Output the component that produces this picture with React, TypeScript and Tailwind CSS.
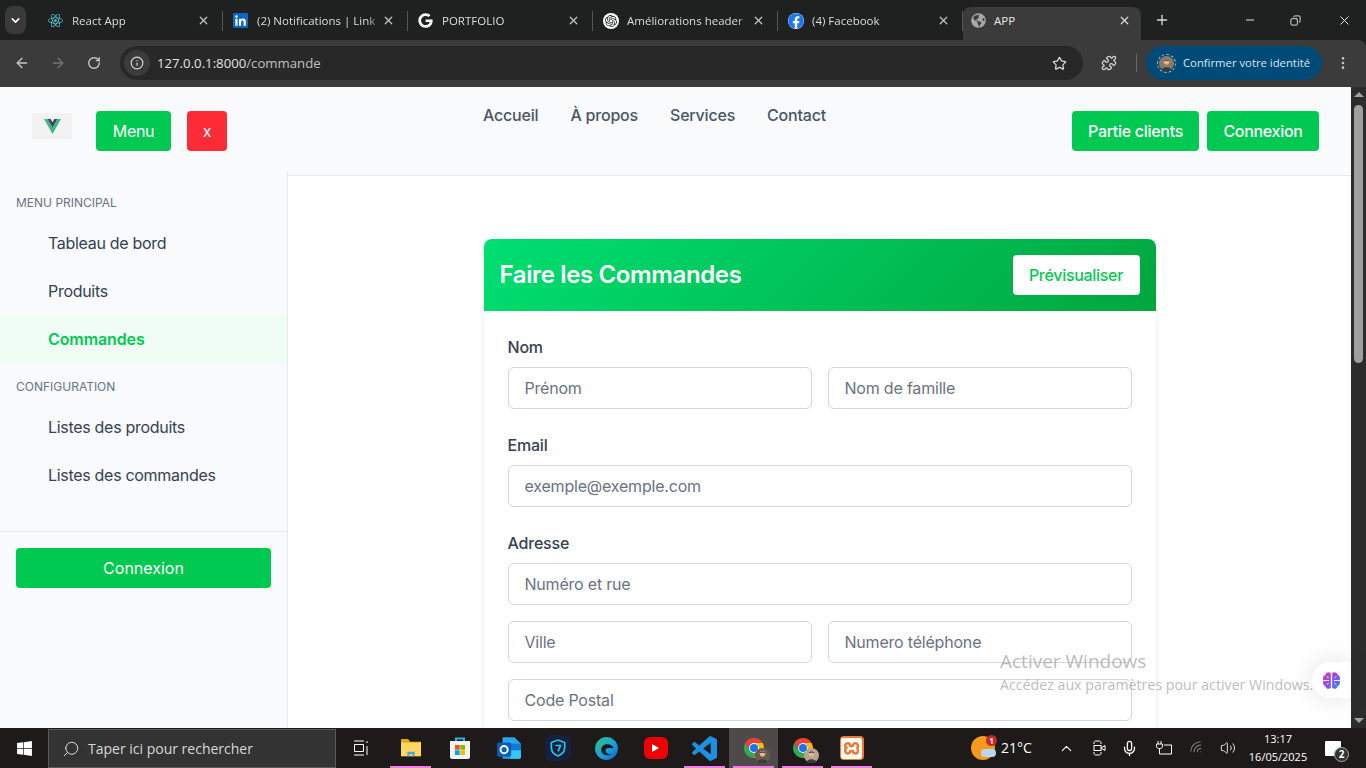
import type { ReactNode } from "react";
import { ArrowLeft, ArrowRight, ChevronDown, ChevronUp, Copy, EllipsisVertical, Info, Mic, Minus, Plus, Puzzle, RotateCw, Search, Star, Volume2, Wifi, X } from "lucide-react";
import { FaFacebook, FaGlobeAmericas, FaGoogle, FaLinkedin, FaReact, FaWindows } from "react-icons/fa";
import { SiOpenai, SiXampp } from "react-icons/si";

const chromeFont = { fontFamily: '"Open Sans", "Liberation Sans", sans-serif' };
const pageFont = { fontFamily: 'Inter, "Liberation Sans", sans-serif' };

type TabItem = { title: string; icon: ReactNode };

const tabs: TabItem[] = [
  { title: "React App", icon: <FaReact className="text-[#5fc9d8]" size={15} /> },
  {
    title: "(2) Notifications | Link",
    icon: (
      <span className="flex size-[15px] items-center justify-center rounded-sm bg-white">
        <FaLinkedin className="text-[#0a66c2]" size={17} />
      </span>
    ),
  },
  { title: "PORTFOLIO", icon: <FaGoogle className="text-white" size={15} /> },
  {
    title: "Améliorations header",
    icon: (
      <span className="flex size-4 items-center justify-center rounded-full bg-white">
        <SiOpenai className="text-[#222]" size={12} />
      </span>
    ),
  },
  {
    title: "(4) Facebook",
    icon: (
      <span className="flex size-4 items-center justify-center rounded-full bg-white">
        <FaFacebook className="text-[#1877f2]" size={16} />
      </span>
    ),
  },
];

function Tab({ title, icon }: TabItem) {
  return (
    <div className="flex h-[40px] w-[185px] shrink-0 items-center pl-[10px] pt-px">
      <span className="flex w-[24px] shrink-0 items-center">{icon}</span>
      <span className="w-[125px] shrink-0 overflow-hidden whitespace-nowrap text-[11.5px] text-[#dcdcdc] [mask-image:linear-gradient(to_right,black_88%,transparent)]">{title}</span>
      <X className="shrink-0 text-[#c7c7c7]" size={13} strokeWidth={2.2} />
      <span className="ml-3 h-5 w-px shrink-0 bg-[#555]" />
    </div>
  );
}

function Avatar({ skin, size }: { skin: string; size: string }) {
  return (
    <svg viewBox="0 0 16 16" className={size}>
      <circle cx="8" cy="8" r="8" fill={skin} />
      <circle cx="8" cy="6" r="3" fill="#e2b998" />
      <path fill="#2b2622" d="M5 5.500C5 3 11 3 11 5.500 9 4.500 7 4.500 5 5.500z" />
      <path fill="#3c3a3a" d="M3 15c0-4 10-4 10 0a8 8 0 0 1-10 0z" />
    </svg>
  );
}

function ChromeLogo({ badge }: { badge: string }) {
  return (
    <span className="relative block size-6">
      <svg viewBox="0 0 24 24" className="size-6">
        <path fill="#ea4335" d="M12 2A10 10 0 0 1 20.66 7H12a5 5 0 0 0-4.33 7.5L3.34 7A10 10 0 0 1 12 2z" />
        <path fill="#34a853" d="M3.34 7A10 10 0 0 0 12 22l4.33-7.5a5 5 0 0 1-8.66 0z" />
        <path fill="#fbbc04" d="M20.66 7H12a5 5 0 0 1 4.33 7.5L12 22A10 10 0 0 0 20.66 7z" />
        <circle cx="12" cy="12" r="5" fill="#fff" />
        <circle cx="12" cy="12" r="4" fill="#1a73e8" />
      </svg>
      <span className="absolute -bottom-[3px] -right-[4px]">
        <Avatar skin={badge} size="size-[15px]" />
      </span>
    </span>
  );
}

function ChromeBar() {
  return (
    <div style={chromeFont} className="h-[87px] shrink-0 bg-[#1f2020]">
      <div className="flex h-[40px] items-end">
        <div className="ml-[5px] mr-[12px] flex h-[28px] w-[21px] self-center items-center justify-center rounded-lg bg-[#3a3a3a]">
          <ChevronDown className="text-white" size={13} strokeWidth={3} />
        </div>
        {tabs.map((tab) => (
          <Tab key={tab.title} {...tab} />
        ))}
        <div className="flex h-[33px] w-[178px] items-center rounded-t-lg bg-[#3b3b3b] pb-[6px] pl-2 pr-[10px]">
          <FaGlobeAmericas className="mr-2 text-[#a5a8ac]" size={15} />
          <span className="flex-1 text-[11.5px] text-[#e6e6e6]">APP</span>
          <X className="text-[#d8d8d8]" size={13} strokeWidth={2.2} />
        </div>
        <div className="flex h-[40px] flex-1 items-center">
          <Plus className="ml-[13px] text-[#d8d8d8]" size={16} />
          <Minus className="ml-[74px] text-[#e6e6e6]" size={12} />
          <Copy className="ml-[34px] -scale-x-100 text-[#e6e6e6]" size={11} />
          <X className="ml-[36px] text-[#e6e6e6]" size={15} strokeWidth={1.6} />
        </div>
      </div>
      <div className="flex h-[47px] items-center rounded-tr-lg bg-[#3b3b3b] pb-[1px]">
        <ArrowLeft className="ml-[14px] text-[#c7c7c7]" size={16} />
        <ArrowRight className="ml-[20px] text-[#747474]" size={16} />
        <RotateCw className="ml-[21px] text-[#c7c7c7]" size={14} strokeWidth={2.4} />
        <div className="ml-[19px] flex h-[34px] w-[963px] items-center rounded-full bg-[#282828]">
          <span className="ml-[4px] flex size-[26px] items-center justify-center rounded-full bg-[#3b3b3b]">
            <Info className="text-[#d8d8d8]" size={14} />
          </span>
          <span className="ml-[7px] flex-1 pt-px text-[13.2px] text-[#e3e3e3]">
            127.0.0.1:8000<span className="text-[#c0c0c0]">/commande</span>
          </span>
          <Star className="mr-[16px] text-[#d8d8d8]" size={15} strokeWidth={2} />
        </div>
        <Puzzle className="ml-[18px] text-[#d0d0d0]" size={16} />
        <span className="ml-[19px] h-[18px] w-px bg-[#666]" />
        <div className="ml-[9px] flex h-[34px] w-[176px] items-center rounded-full bg-[#004a77] pl-[11px]">
          <span className="rounded-full border border-dashed border-[#9cc] p-px">
            <Avatar skin="#8a7a66" size="size-[15px]" />
          </span>
          <span className="ml-[7px] whitespace-nowrap text-[11.3px] text-[#d3e8f8]">Confirmer votre identité</span>
        </div>
        <EllipsisVertical className="ml-[13px] text-[#c7c7c7]" size={16} />
      </div>
    </div>
  );
}

function GreenButton({ children, className }: { children: ReactNode; className: string }) {
  return <button className={`h-10 rounded bg-green-500 text-base font-medium text-white ${className}`}>{children}</button>;
}

function PageHeader() {
  return (
    <header className="flex h-[89px] shrink-0 items-start border-b border-gray-200 bg-gray-50 px-8 tracking-[-0.3px]">
      <div className="mt-6 flex items-start">
        <div className="mt-[2px] flex h-[26px] w-10 items-center justify-center bg-[#f2f2f2]">
          <svg viewBox="0 0 24 21" className="h-[15px] w-[17px]">
            <path fill="#41b883" d="M0 0h5l7 12L19 0h5L12 21z" />
            <path fill="#35495e" d="M5 0h4.400L12 4.600 14.600 0H19l-7 12z" />
          </svg>
        </div>
        <GreenButton className="ml-6 w-[75px] font-normal">Menu</GreenButton>
        <button className="ml-4 h-10 w-10 rounded bg-red-500 text-base text-white">x</button>
      </div>
      <nav className="ml-[256px] mt-4 flex gap-8 text-base font-medium tracking-[-0.2px] text-gray-600">
        <span>Accueil</span>
        <span>À propos</span>
        <span>Services</span>
        <span>Contact</span>
      </nav>
      <div className="ml-auto mt-6 flex gap-2">
        <GreenButton className="w-[127px]">Partie clients</GreenButton>
        <GreenButton className="w-[112px]">Connexion</GreenButton>
      </div>
    </header>
  );
}

function SideLink({ label, active }: { label: string; active?: boolean }) {
  return (
    <div className={`flex h-12 items-center pl-12 text-base ${active ? "bg-green-50 font-semibold tracking-[-0.1px] text-green-500" : "tracking-[-0.3px] text-gray-700"}`}>
      {label}
    </div>
  );
}

function Sidebar() {
  return (
    <aside className="relative -mt-[5px] flex w-[288px] shrink-0 flex-col border-r border-gray-200 bg-gray-50">
      <div className="h-[361px] border-b border-gray-200 pt-[20px]">
        <p className="flex h-[24px] items-center pl-4 text-xs uppercase text-gray-500">Menu principal</p>
        <div className="mt-[4px]">
          <SideLink label="Tableau de bord" />
          <SideLink label="Produits" />
          <SideLink active label="Commandes" />
        </div>
        <p className="mt-[12px] flex h-[24px] items-center pl-4 text-xs uppercase text-gray-500">Configuration</p>
        <div className="mt-[4px]">
          <SideLink label="Listes des produits" />
          <SideLink label="Listes des commandes" />
        </div>
      </div>
      <div className="px-4 pt-4">
        <GreenButton className="w-[255px] font-normal">Connexion</GreenButton>
      </div>
    </aside>
  );
}

function Field({ placeholder }: { placeholder: string }) {
  return (
    <input
      placeholder={placeholder}
      className="h-[42px] w-full rounded-md border border-gray-300 bg-white px-4 text-base tracking-[-0.2px] outline-none placeholder:text-gray-500"
    />
  );
}

function OrderForm() {
  return (
    <main className="flex min-w-0 flex-1 justify-center overflow-hidden bg-white pt-[63px]">
      <section className="h-fit w-[672px] rounded-lg bg-white shadow-md">
        <div className="flex h-[72px] items-center justify-between rounded-t-lg bg-linear-[135deg] from-green-400 to-green-600 px-4">
          <h1 className="text-2xl font-semibold tracking-[-0.37px] text-white">Faire les Commandes</h1>
          <button className="h-10 w-[127px] rounded bg-white text-base font-medium tracking-[-0.3px] text-green-500">Prévisualiser</button>
        </div>
        <form className="flex flex-col px-6 pb-6 pt-6">
          <label className="mb-2 h-6 text-base font-medium tracking-[-0.2px] text-gray-700">Nom</label>
          <div className="grid grid-cols-2 gap-4">
            <Field placeholder="Prénom" />
            <Field placeholder="Nom de famille" />
          </div>
          <label className="mb-2 mt-6 h-6 text-base font-medium tracking-[-0.2px] text-gray-700">Email</label>
          <Field placeholder="exemple@exemple.com" />
          <label className="mb-2 mt-6 h-6 text-base font-medium tracking-[-0.2px] text-gray-700">Adresse</label>
          <div className="grid grid-cols-2 gap-4">
            <div className="col-span-2">
              <Field placeholder="Numéro et rue" />
            </div>
            <Field placeholder="Ville" />
            <Field placeholder="Numero téléphone" />
            <div className="col-span-2">
              <Field placeholder="Code Postal" />
            </div>
          </div>
        </form>
      </section>
    </main>
  );
}

function Scrollbar() {
  return (
    <div className="flex w-[15px] shrink-0 flex-col items-center bg-[#2c2c2c]">
      <span className="mt-[5px] size-0 border-x-[5px] border-b-[5px] border-x-transparent border-b-[#a0a0a0]" />
      <span className="mt-[8px] h-[258px] w-[9px] rounded-full bg-[#9f9f9f]" />
      <span className="mt-auto mb-[5px] size-0 border-x-[5px] border-t-[5px] border-x-transparent border-t-[#a0a0a0]" />
    </div>
  );
}

function BrainWidget() {
  return (
    <div className="absolute right-[15px] top-[575px] flex h-9 w-[39px] items-center justify-center rounded-l-full bg-white shadow-[0_0_24px_rgba(0,0,0,0.12)]">
      <svg viewBox="0 0 20 20" className="size-[19px]">
        <defs>
          <linearGradient id="brain" x1="0" y1="0" x2="1" y2="1">
            <stop offset="0" stopColor="#ec3f9c" />
            <stop offset="0.5" stopColor="#8b4cf0" />
            <stop offset="1" stopColor="#2f8bf5" />
          </linearGradient>
        </defs>
        <path fill="url(#brain)" d="M9.300 2v16C7 19.500 4 18.500 3.500 16 1 15 .5 12 1.500 10 .5 8 1 5 3.500 4 4 1.500 7 .5 9.300 2zM10.700 2v16c2.300 1.500 5.300.5 5.800-2 2.500-1 3-4 2-6 1-2 .5-5-2-6-.5-2.500-3.500-3.500-5.800-2z" />
        <path fill="none" stroke="#fff" strokeWidth="1" d="M1.500 10h6M12.500 10h6M5 5.500l2 2M15 5.500l-2 2M5 14.500l2-2M15 14.500l-2-2" />
      </svg>
    </div>
  );
}

function Watermark() {
  return (
    <div style={chromeFont} className="pointer-events-none absolute left-[1000px] top-[561px] whitespace-nowrap text-[#9d9d9d]/70">
      <p className="text-[19px] leading-[26px]">Activer Windows</p>
      <p className="mt-[2px] text-[14.2px] leading-[18px]">Accédez aux paramètres pour activer Windows.</p>
    </div>
  );
}

function TaskSlot({ children, open, active }: { children?: ReactNode; open?: boolean; active?: boolean }) {
  return (
    <div className={`relative flex h-full w-[49px] items-center justify-center ${active ? "bg-[#4e4a4a]" : ""}`}>
      {children}
      {open && <span className="absolute inset-x-[4px] bottom-0 h-[2px] bg-[#f07ce0]" />}
    </div>
  );
}

function Taskbar() {
  return (
    <div style={chromeFont} className="flex h-10 shrink-0 items-center bg-[#1e1a1a] text-white">
      <div className="flex w-[48px] justify-center">
        <FaWindows size={17} />
      </div>
      <div className="flex h-[39px] w-[288px] self-end items-center border border-[#5a5a5a] bg-[#333] pl-[13px]">
        <Search className="-scale-x-100 text-[#e0e0e0]" size={18} strokeWidth={1.3} />
        <span className="ml-[8px] text-sm text-[#d8d8d8]">Taper ici pour rechercher</span>
      </div>
      <div className="flex h-full w-[50px] items-center justify-center">
        <svg viewBox="0 0 16 16" className="size-4" fill="none" stroke="#fff" strokeWidth="1">
          <path d="M1 1h10M1 15h10M1.500 4.500h9v7h-9zM14 1v2M14 6v9" />
        </svg>
      </div>
      <TaskSlot open>
        <svg viewBox="0 0 24 22" className="h-[20px] w-[22px]">
          <path fill="#e3a812" d="M1 1h8l2 3h12v16H1z" />
          <path fill="#ffd660" d="M1 5h22v15H1z" />
          <path fill="#3ba7e6" d="M8 15h8v5h-2v-2h-4v2H8z" />
        </svg>
      </TaskSlot>
      <TaskSlot>
        <svg viewBox="0 0 24 24" className="size-6">
          <path fill="none" stroke="#27b5e8" strokeWidth="2" d="M8 6V2.500h8V6" />
          <path fill="#f2f2f2" d="M2 5h20v16a2 2 0 0 1-2 2H4a2 2 0 0 1-2-2z" />
          <path fill="#f25022" d="M7 9h4.700v4.700H7z" />
          <path fill="#7fba00" d="M12.300 9H17v4.700h-4.700z" />
          <path fill="#00a4ef" d="M7 14.300h4.700V19H7z" />
          <path fill="#ffb900" d="M12.300 14.300H17V19h-4.700z" />
        </svg>
      </TaskSlot>
      <TaskSlot>
        <svg viewBox="0 0 24 24" className="size-[26px]">
          <path fill="#28a8ea" d="M6 2h11l6 6v12a2 2 0 0 1-2 2H6z" />
          <path fill="#35c6f4" d="M13 14h10v6a2 2 0 0 1-2 2h-8z" />
          <path fill="#0f78d4" d="M6 8h17v6H6z" />
          <rect x="1" y="7" width="13" height="13" rx="1.500" fill="#0a5fb4" />
          <circle cx="7.500" cy="13.500" r="3.300" fill="none" stroke="#fff" strokeWidth="1.800" />
        </svg>
      </TaskSlot>
      <TaskSlot>
        <span className="flex size-[26px] items-center justify-center rounded-md bg-[#15203c]">
          <svg viewBox="0 0 24 24" className="size-5" fill="none" stroke="#25c7e8" strokeWidth="2">
            <path d="M12 2.500l8 3v6c0 5-3.500 8.500-8 10-4.500-1.500-8-5-8-10v-6z" />
            <path d="M9 9h6l-3 7" />
          </svg>
        </span>
      </TaskSlot>
      <TaskSlot>
        <svg viewBox="0 0 24 24" className="size-[25px]">
          <defs>
            <linearGradient id="edgeFill" x1="0" y1="0" x2="1" y2="1">
              <stop offset="0" stopColor="#35c26d" />
              <stop offset="0.55" stopColor="#1a9fe0" />
              <stop offset="1" stopColor="#0b62c4" />
            </linearGradient>
          </defs>
          <circle cx="12" cy="12" r="11" fill="url(#edgeFill)" />
          <path fill="#1e1a1a" d="M12.500 8C9 8 7 10.500 7 13.500c0 3 2.500 5 5.500 5 1.500 0 3-.3 4-1-3 .5-5.500-1-5.500-3.500 0-1 .5-1.800 1.500-2.200 1.500-.5 3.500 0 6 0 0-2-2.500-3.800-6-3.800z" />
        </svg>
      </TaskSlot>
      <TaskSlot>
        <span className="flex h-[22px] w-6 items-center justify-center rounded-md bg-[#ee0000]">
          <span className="size-0 border-y-[4px] border-l-[7px] border-y-transparent border-l-white" />
        </span>
      </TaskSlot>
      <TaskSlot open>
        <svg viewBox="0 0 24 24" className="size-[25px]">
          <path fill="#1f8fe0" d="M23.150 2.587L18.210.21a1.494 1.494 0 0 0-1.705.29l-9.460 8.630-4.120-3.128a.999.999 0 0 0-1.276.057L.327 7.261A1 1 0 0 0 .326 8.740L3.899 12 .326 15.260a1 1 0 0 0 .001 1.479L1.650 17.940a.999.999 0 0 0 1.276.057l4.120-3.128 9.460 8.630a1.492 1.492 0 0 0 1.704.29l4.942-2.377A1.500 1.500 0 0 0 24 20.060V3.939a1.500 1.500 0 0 0-.850-1.352zm-5.146 14.861L10.826 12l7.178-5.448v10.896z" />
        </svg>
      </TaskSlot>
      <TaskSlot open active>
        <ChromeLogo badge="#6b5a4c" />
      </TaskSlot>
      <TaskSlot open>
        <ChromeLogo badge="#b9a58f" />
      </TaskSlot>
      <TaskSlot open>
        <span className="flex size-6 items-center justify-center rounded-sm bg-[#ef7a2e]">
          <SiXampp className="text-white" size={21} />
        </span>
      </TaskSlot>
      <div className="ml-[95px] flex w-[70px] shrink-0 items-center">
        <span className="relative block h-6 w-6 rounded-full bg-[#f59a1f]">
          <span className="absolute -right-[2px] -top-[1px] flex size-[11px] items-center justify-center rounded-full bg-[#c62828] text-[8px] font-bold">1</span>
          <span className="absolute -right-[1px] bottom-[3px] h-[8px] w-[15px] rounded-full bg-[#b9d6f2]" />
        </span>
        <span className="ml-[6px] whitespace-nowrap text-sm">21°C</span>
      </div>
      <ChevronUp className="ml-[17px]" size={17} strokeWidth={1.500} />
      <svg viewBox="0 0 16 16" className="ml-[16px] size-4" fill="none" stroke="#fff" strokeWidth="1">
        <path d="M3 4V2.500C3 1.500 4 1 5 1h3c1 0 2 .5 2 1.500V4M3 12v1.500c0 1 1 1.500 2 1.500h3c1 0 2-.5 2-1.500V12" />
        <rect x="3" y="5.500" width="7" height="5" />
        <path d="M10 8l4-2.500v5z" />
      </svg>
      <Mic className="ml-[14px]" size={17} strokeWidth={1.800} />
      <svg viewBox="0 0 18 16" className="ml-[17px] h-4 w-[18px]" fill="none" stroke="#fff" strokeWidth="1">
        <path d="M3 1v3M6 1v3M1.500 4h6v2.500c0 1-1 2-3 2s-3-1-3-2zM4.500 8.500V14h12V5H9" />
      </svg>
      <Wifi className="ml-[16px] -rotate-45 text-[#888]" size={16} strokeWidth={1.500} />
      <Volume2 className="ml-[15px]" size={16} strokeWidth={1.300} />
      <div className="ml-[6px] flex w-[72px] shrink-0 flex-col items-center text-[11px] leading-[18px]">
        <span>13:17</span>
        <span>16/05/2025</span>
      </div>
      <div className="relative ml-[11px] flex items-center">
        <span className="block h-[15px] w-4 rounded-[1px] bg-white" />
        <span className="absolute -right-[8px] top-[6px] flex size-[15px] items-center justify-center rounded-full border border-[#aaa] bg-[#333] text-[10px] font-bold">2</span>
      </div>
    </div>
  );
}

export default function App() {
  return (
    <div style={pageFont} className="relative flex h-[768px] w-[1366px] flex-col overflow-hidden bg-white">
      <ChromeBar />
      <div className="relative flex min-h-0 flex-1">
        <div className="flex min-w-0 flex-1 flex-col overflow-hidden">
          <PageHeader />
          <div className="flex min-h-0 flex-1">
            <Sidebar />
            <OrderForm />
          </div>
        </div>
        <Scrollbar />
        <Watermark />
        <BrainWidget />
      </div>
      <Taskbar />
    </div>
  );
}
